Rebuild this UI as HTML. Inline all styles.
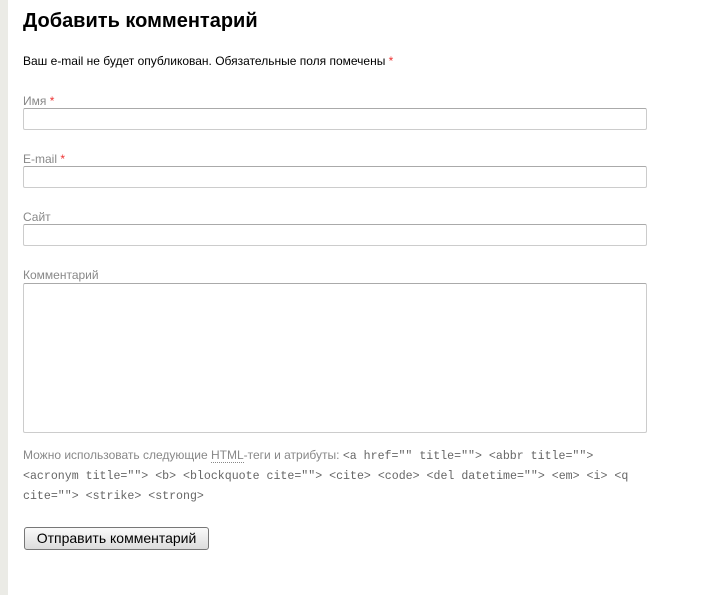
<!DOCTYPE html>
<html><head><meta charset="utf-8"><style>
body{margin:0;width:716px;height:595px;background:#fff;font-family:"Liberation Sans",sans-serif;position:relative;overflow:hidden}
.strip{position:absolute;left:0;top:0;width:8px;height:595px;background:#ebebe6}
.a{position:absolute;left:23px}
h1{position:absolute;left:23px;top:10px;margin:0;font-size:20px;font-weight:bold;color:#000}
.note{top:54px;font-size:12px;color:#000}
.lbl{font-size:12px;color:#888}
.r{color:#e33}
.in{position:absolute;left:23px;width:622px;height:20px;border:1px solid #ccc;border-top-color:#aaa;border-radius:2px;background:#fff}
.tags{top:446px;font-size:12px;color:#888;line-height:19px;width:630px}
.tags code{font-family:"Liberation Mono",monospace;font-size:11.6px;color:#666;line-height:19px}
.btn{position:absolute;left:24px;top:527px;width:183px;height:21px;border:1px solid #777;border-radius:3px;background:linear-gradient(#fafafa,#dcdcdc);font-size:14px;color:#000;text-align:center;line-height:21px}
</style></head><body>
<div class="strip"></div>
<h1>Добавить комментарий</h1>
<div class="a note">Ваш e-mail не будет опубликован. Обязательные поля помечены <span class="r">*</span></div>
<div class="a lbl" style="top:94px">Имя <span class="r">*</span></div>
<div class="in" style="top:108px"></div>
<div class="a lbl" style="top:152px">E-mail <span class="r">*</span></div>
<div class="in" style="top:166px"></div>
<div class="a lbl" style="top:210px">Сайт</div>
<div class="in" style="top:224px"></div>
<div class="a lbl" style="top:268px">Комментарий</div>
<div class="in" style="top:283px;height:148px"></div>
<div class="a tags">Можно использовать следующие <span style="border-bottom:1px dotted #888">HTML</span>-теги и атрибуты: <code>&lt;a href="" title=""&gt; &lt;abbr title=""&gt;<br>&lt;acronym title=""&gt; &lt;b&gt; &lt;blockquote cite=""&gt; &lt;cite&gt; &lt;code&gt; &lt;del datetime=""&gt; &lt;em&gt; &lt;i&gt; &lt;q<br>cite=""&gt; &lt;strike&gt; &lt;strong&gt;</code></div>
<div class="btn">Отправить комментарий</div>
</body></html>
